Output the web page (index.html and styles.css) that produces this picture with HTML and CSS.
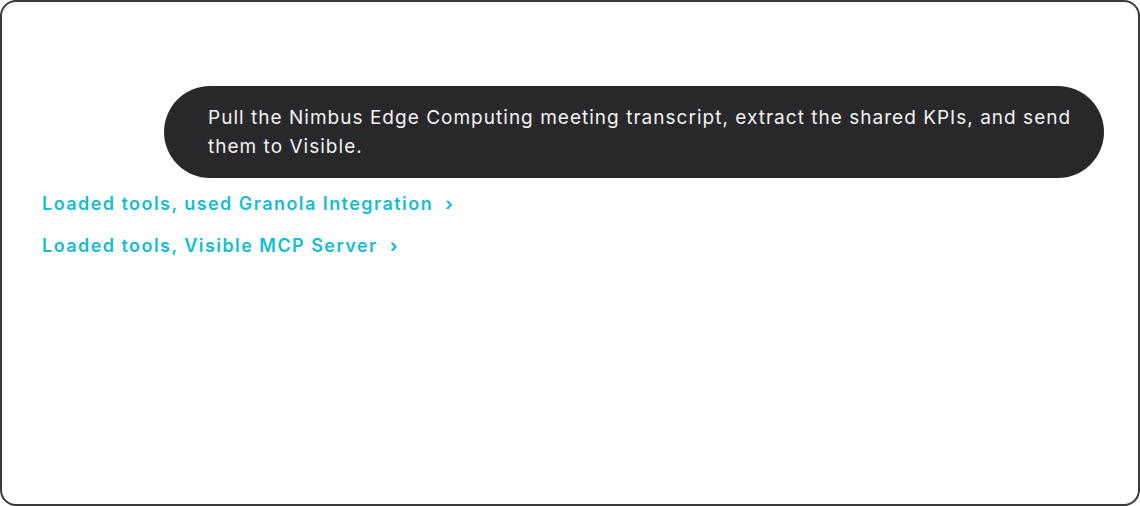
FILE: index.html
```html
<!DOCTYPE html>
<html>
<head>
<meta charset="utf-8">
<link rel="stylesheet" href="styles.css">
</head>
<body>
<div class="frame">
  <div class="msg-row">
    <div class="bubble">Pull the Nimbus Edge Computing meeting transcript, extract the shared KPIs, and send them to Visible.</div>
  </div>
  <div class="tools">
    <div class="tool">Loaded tools, used Granola Integration<span class="chev">›</span></div>
    <div class="tool">Loaded tools, Visible MCP Server<span class="chev">›</span></div>
  </div>
</div>
</body>
</html>
```
FILE: styles.css
```css
html, body {
  margin: 0;
  padding: 0;
  background: #ffffff;
}
.frame {
  box-sizing: border-box;
  width: 1140px;
  height: 506px;
  border: 2px solid #3a3a3c;
  border-radius: 16px;
  font-family: "Inter", "Liberation Sans", sans-serif;
  padding: 84px 34px 0 40px;
}
.msg-row {
  display: flex;
  justify-content: flex-end;
}
.bubble {
  box-sizing: border-box;
  width: 940px;
  min-height: 92px;
  background: #28282a;
  color: #f2f2f2;
  border-radius: 46px;
  padding: 17px 30px 17px 44px;
  font-size: 19px;
  line-height: 29px;
  letter-spacing: 1.02px;
}
.tools {
  display: flex;
  flex-direction: column;
  gap: 18px;
  margin-top: 14px;
}
.tool {
  color: #14bdd3;
  font-size: 18px;
  font-weight: 600;
  line-height: 24px;
  letter-spacing: 1.45px;
}
.chev {
  margin-left: 12px;
  font-weight: 700;
}
```
